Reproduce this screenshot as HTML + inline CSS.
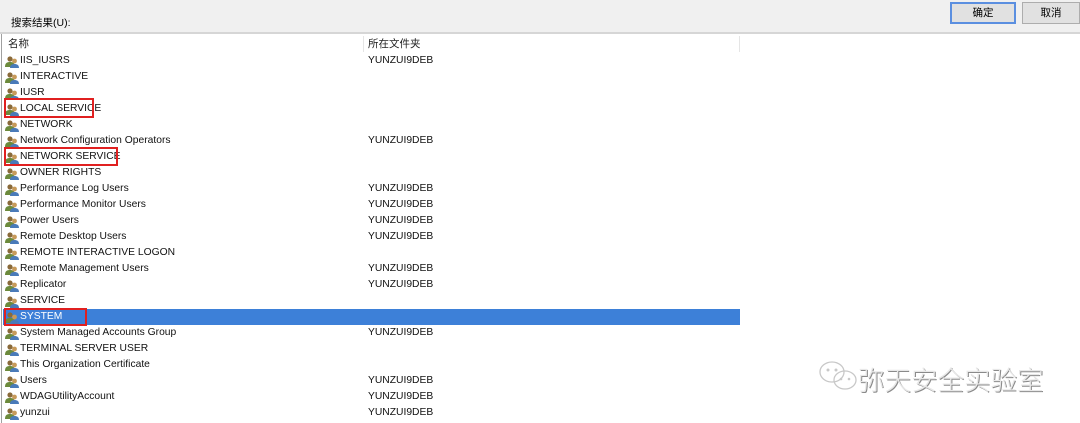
<!DOCTYPE html><html><head><meta charset="utf-8"><style>
body{margin:0;width:1080px;height:423px;overflow:hidden;background:#fff;font-family:"Liberation Sans","Noto Sans CJK SC",sans-serif;font-size:10.5px;color:#000;position:relative}
.top{position:absolute;left:0;top:0;width:1080px;height:32px;background:#f0f0f0;border-bottom:2px solid #d6d6d6}
.lbl{position:absolute;left:11px;top:15px;font-size:10.5px}
.btn{position:absolute;top:2px;height:20px;background:#e1e1e1;border:1px solid #adadad;text-align:center;line-height:20px;font-size:10.5px}
.vl{position:absolute;left:1px;top:34px;width:1px;height:389px;background:#a0a0a0}
.hdr{position:absolute;top:36px;font-size:10.5px;color:#222}
.row{position:absolute;left:3px;width:737px;height:16px;line-height:16px;white-space:nowrap;font-size:10.3px;color:#111}
.row .n{position:absolute;left:17px}
.row .f{position:absolute;left:365px}
.row svg{position:absolute;left:2px;top:2px}
.sel{background:#3d80d8;color:#fff}
.box{position:absolute;border:2px solid #e02020}
</style></head><body>
<div class="top"><div class="lbl">搜索结果(U):</div>
<div class="btn" style="left:950px;width:62px;border:2px solid #5b8fe0;height:18px;line-height:18px">确定</div>
<div class="btn" style="left:1022px;width:56px">取消</div></div>
<div class="vl"></div>
<div class="hdr" style="left:8px">名称</div>
<div class="hdr" style="left:368px">所在文件夹</div>
<div style="position:absolute;left:363px;top:36px;width:1px;height:16px;background:#e5e5e5"></div>
<div style="position:absolute;left:739px;top:36px;width:1px;height:16px;background:#e5e5e5"></div>
<div id="rows"></div>
<div class="box" style="left:4px;top:98px;width:86px;height:16px"></div>
<div class="box" style="left:4px;top:147px;width:110px;height:15px"></div>
<div class="box" style="left:4px;top:308px;width:79px;height:14px"></div>
<div style="position:absolute;left:818px;top:360px;width:50px;height:36px">
<svg width="50" height="36" viewBox="0 0 50 36"><g fill="none" stroke="#c8c8c8" stroke-width="1.3"><ellipse cx="14" cy="12" rx="12" ry="10"/><ellipse cx="27" cy="20" rx="11" ry="9"/></g><g fill="#c8c8c8"><circle cx="10" cy="10" r="1.5"/><circle cx="18" cy="10" r="1.5"/><circle cx="23" cy="19" r="1.3"/><circle cx="31" cy="19" r="1.3"/></g></svg></div>
<div style="position:absolute;left:858px;top:359px;font-size:26.5px;color:#e8e8e8;text-shadow:1px 1px 0 #8a8a8a;font-family:'Noto Sans CJK SC',sans-serif;font-weight:300">弥天安全实验室</div>
<script>
var d=[["IIS_IUSRS",1],["INTERACTIVE",0],["IUSR",0],["LOCAL SERVICE",0],["NETWORK",0],["Network Configuration Operators",1],["NETWORK SERVICE",0],["OWNER RIGHTS",0],["Performance Log Users",1],["Performance Monitor Users",1],["Power Users",1],["Remote Desktop Users",1],["REMOTE INTERACTIVE LOGON",0],["Remote Management Users",1],["Replicator",1],["SERVICE",0],["SYSTEM",0],["System Managed Accounts Group",1],["TERMINAL SERVER USER",0],["This Organization Certificate",0],["Users",1],["WDAGUtilityAccount",1],["yunzui",1]];
var ic='<svg width="14" height="13" viewBox="0 0 14 13"><circle cx="5" cy="4" r="2.6" fill="#8a6a3a"/><path d="M0 12c0-4 2-5 5-5s5 1 5 5z" fill="#6c8a3c"/><circle cx="9.5" cy="6" r="2.4" fill="#c79a5a"/><path d="M5 13c0-3 2-4 4.5-4s4.5 1 4.5 4z" fill="#4a7ab8"/></svg>';
var h='';d.forEach(function(r,i){h+='<div class="row'+(r[0]=="SYSTEM"?' sel':'')+'" style="top:'+(53+i*16)+'px">'+ic+'<span class="n">'+r[0]+'</span>'+(r[1]?'<span class="f">YUNZUI9DEB</span>':'')+'</div>';});
document.getElementById('rows').innerHTML=h;
</script>
</body></html>
